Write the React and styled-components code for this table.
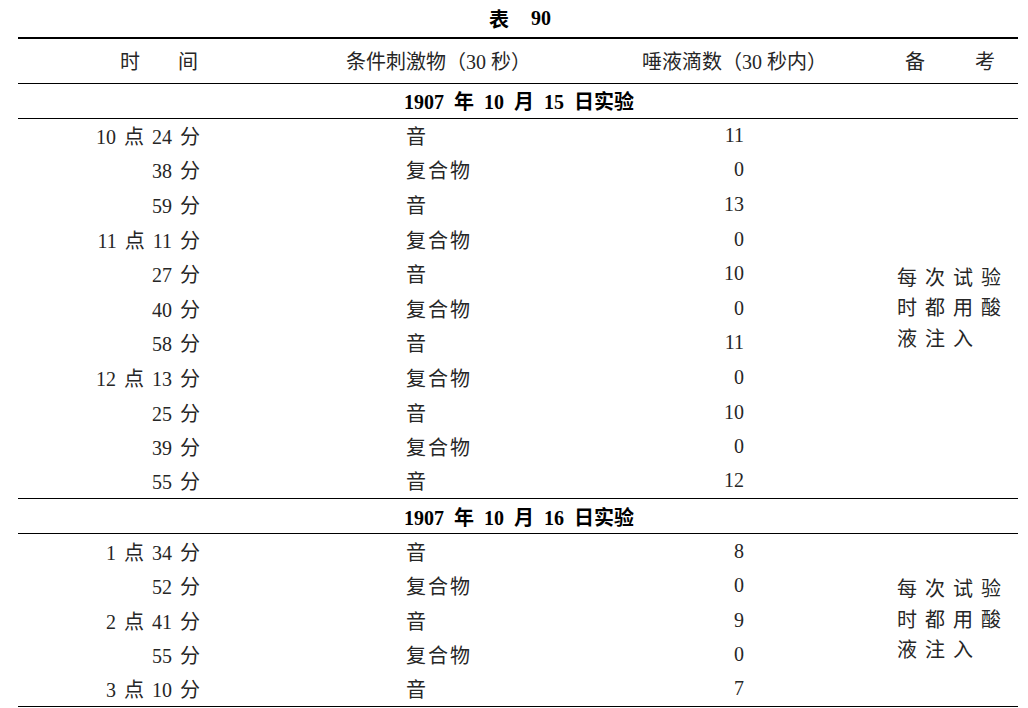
import styled, { createGlobalStyle } from "styled-components";

const GlobalStyle = createGlobalStyle`
  html, body {
    margin: 0;
    padding: 0;
    background: #fff;
  }
  body {
    font-family: "Liberation Serif", "Noto Sans CJK SC", serif;
    color: #262626;
  }
`;

const Page = styled.div`
  width: 1028px;
  height: 708px;
  padding: 0 10px 0 18px;
  box-sizing: border-box;
`;

const Title = styled.div`
  height: 37px;
  display: flex;
  align-items: center;
  justify-content: center;
  gap: 22px;
  padding-left: 4px;
  font-size: 20px;
  font-weight: 700;
  color: #000;
`;

const Table = styled.table`
  width: 1000px;
  border-collapse: collapse;
  table-layout: fixed;
  border-top: 2.5px solid #000;
  border-bottom: 1.5px solid #000;
  font-size: 20px;
`;

const HeadRow = styled.tr`
  height: 45px;
  border-bottom: 1px solid #000;
`;

const HeadCell = styled.th`
  font-weight: 400;
  padding: 0 0 1px ${(p) => p.$pl || 0}px;
  text-align: left;
  white-space: pre;
`;

const Spread = styled.span`
  display: inline-flex;
  gap: ${(p) => p.$gap}px;
`;

const SectionRow = styled.tr`
  height: 35px;
  border-bottom: 1px solid #000;
  border-top: 1px solid #000;
`;

const SectionCell = styled.td`
  text-align: center;
  font-weight: 700;
  color: #000;
  word-spacing: 5px;
  padding: 0 0 0 2px;
`;

const Row = styled.tr`
  height: 34.6px;
`;

const TimeCell = styled.td`
  text-align: right;
  padding: 0 100px 0 0;
  white-space: pre;
  word-spacing: 3px;
`;

const StimCell = styled.td`
  text-align: left;
  padding: 0 0 0 106px;
  letter-spacing: 2px;
`;

const DropCell = styled.td`
  text-align: right;
  padding: 0 106px 0 0;
`;

const NoteCell = styled.td`
  padding: 0 0 0 47px;
  vertical-align: middle;
`;

const NoteLine = styled.div`
  line-height: 30.5px;
  letter-spacing: 8px;
  white-space: nowrap;
`;

const sections = [
  {
    label: "1907 年 10 月 15 日实验",
    rows: [
      ["10 点 24 分", "音", "11"],
      ["38 分", "复合物", "0"],
      ["59 分", "音", "13"],
      ["11 点 11 分", "复合物", "0"],
      ["27 分", "音", "10"],
      ["40 分", "复合物", "0"],
      ["58 分", "音", "11"],
      ["12 点 13 分", "复合物", "0"],
      ["25 分", "音", "10"],
      ["39 分", "复合物", "0"],
      ["55 分", "音", "12"],
    ],
  },
  {
    label: "1907 年 10 月 16 日实验",
    rows: [
      ["1 点 34 分", "音", "8"],
      ["52 分", "复合物", "0"],
      ["2 点 41 分", "音", "9"],
      ["55 分", "复合物", "0"],
      ["3 点 10 分", "音", "7"],
    ],
  },
];

const note = ["每次试验", "时都用酸", "液注入"];

export default function App() {
  return (
    <>
      <GlobalStyle />
      <Page>
        <Title>
          <span>表</span>
          <span>90</span>
        </Title>
        <Table>
          <colgroup>
            <col style={{ width: 282 }} />
            <col style={{ width: 300 }} />
            <col style={{ width: 250 }} />
            <col style={{ width: 168 }} />
          </colgroup>
          <thead>
            <HeadRow>
              <HeadCell $pl={102}>
                <Spread $gap={38}>
                  <span>时</span>
                  <span>间</span>
                </Spread>
              </HeadCell>
              <HeadCell $pl={46}>条件刺激物（30 秒）</HeadCell>
              <HeadCell $pl={42}>唾液滴数（30 秒内）</HeadCell>
              <HeadCell $pl={55}>
                <Spread $gap={50}>
                  <span>备</span>
                  <span>考</span>
                </Spread>
              </HeadCell>
            </HeadRow>
          </thead>
          {sections.map((s) => (
            <tbody key={s.label}>
              <SectionRow>
                <SectionCell colSpan={4}>{s.label}</SectionCell>
              </SectionRow>
              {s.rows.map((r, i) => (
                <Row key={i}>
                  <TimeCell>{r[0]}</TimeCell>
                  <StimCell>{r[1]}</StimCell>
                  <DropCell>{r[2]}</DropCell>
                  {i === 0 && (
                    <NoteCell rowSpan={s.rows.length}>
                      {note.map((n) => (
                        <NoteLine key={n}>{n}</NoteLine>
                      ))}
                    </NoteCell>
                  )}
                </Row>
              ))}
            </tbody>
          ))}
        </Table>
      </Page>
    </>
  );
}
